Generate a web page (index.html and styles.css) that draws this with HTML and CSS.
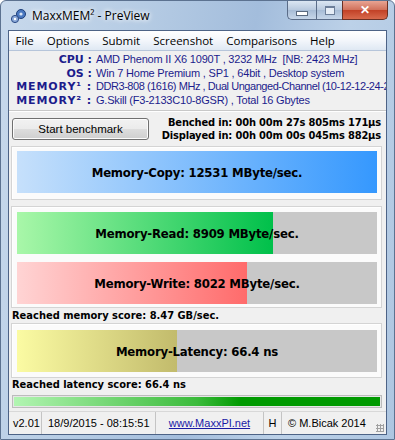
FILE: index.html
```html
<!DOCTYPE html>
<html lang="en">
<head>
    <meta charset="UTF-8">
    <title>MaxxMEM² - PreView</title>
    <link rel="stylesheet" href="styles.css">
</head>
<body>
    <div class="window">
        <div class="titlebar">
            <svg class="app-icon" width="18" height="16" viewBox="0 0 18 16">
                <circle cx="11" cy="6" r="4.5" fill="#4a78c0" stroke="#1e3f7a" stroke-width="1"/>
                <circle cx="11" cy="6" r="1.6" fill="#dbe6f5"/>
                <circle cx="5" cy="11" r="3.6" fill="#8aa8d8" stroke="#2b4a86" stroke-width="1"/>
                <circle cx="5" cy="11" r="1.2" fill="#fff"/>
            </svg>
            <span class="title">MaxxMEM² - PreView</span>
            <div class="caption-buttons">
                <div class="cap-btn cap-min"><span class="min-glyph"></span></div>
                <div class="cap-btn cap-max"><span class="max-glyph"></span></div>
                <div class="cap-btn cap-close">✕</div>
            </div>
        </div>

        <div class="client">
            <ul class="menu">
                <li>File</li>
                <li>Options</li>
                <li>Submit</li>
                <li>Screenshot</li>
                <li>Comparisons</li>
                <li>Help</li>
            </ul>

            <div class="info">
                <div class="info-row"><span class="label">CPU :</span><span class="value">AMD Phenom II X6 1090T , 3232 MHz&nbsp; [NB: 2423 MHz]</span></div>
                <div class="info-row"><span class="label">OS :</span><span class="value">Win 7 Home Premium , SP1 , 64bit , Desktop system</span></div>
                <div class="info-row"><span class="label label-mem">MEMORY¹ :</span><span class="value value-tight">DDR3-808 (1616) MHz , Dual Unganged-Channel (10-12-12-24-2T)</span></div>
                <div class="info-row"><span class="label label-mem">MEMORY² :</span><span class="value">G.Skill (F3-2133C10-8GSR) , Total 16 Gbytes</span></div>
            </div>

            <div class="bench-row">
                <button class="start-btn">Start benchmark</button>
                <div class="times">
                    <div>Benched in: 00h 00m 27s 805ms 171µs</div>
                    <div>Displayed in: 00h 00m 00s 045ms 882µs</div>
                </div>
            </div>

            <div class="panel panel-copy">
                <div class="bar">
                    <div class="fill fill-copy" style="width: 100%"></div>
                    <span class="bar-text">Memory-Copy: 12531 MByte/sec.</span>
                </div>
            </div>

            <div class="panel panel-rw">
                <div class="bar">
                    <div class="fill fill-read" style="width: 71%"></div>
                    <span class="bar-text">Memory-Read: 8909 MByte/sec.</span>
                </div>
                <div class="bar">
                    <div class="fill fill-write" style="width: 64%"></div>
                    <span class="bar-text">Memory-Write: 8022 MByte/sec.</span>
                </div>
            </div>

            <div class="score score-mem">Reached memory score: 8.47 GB/sec.</div>

            <div class="panel panel-lat">
                <div class="bar">
                    <div class="fill fill-latency" style="width: 44.4%"></div>
                    <span class="bar-text">Memory-Latency: 66.4 ns</span>
                </div>
            </div>

            <div class="score score-lat">Reached latency score: 66.4 ns</div>

            <div class="progress"><div class="progress-fill"></div></div>

            <div class="statusbar">
                <span class="st st-ver">v2.01</span>
                <span class="st st-date">18/9/2015 - 08:15:51</span>
                <span class="st st-link">www.MaxxPI.net</span>
                <span class="st st-h">H</span>
                <span class="st st-copy">© M.Bicak 2014</span>
                <span class="grip"></span>
            </div>
        </div>
    </div>
</body>
</html>
```

FILE: styles.css
```css
body {
    margin: 0;
    padding: 0;
    font-family: "Liberation Sans", Arial, sans-serif;
    background-color: #ffffff;
}
.window {
    width: 395px;
    height: 440px;
    box-sizing: border-box;
    padding: 0 7px 4px 7px;
    display: flex;
    flex-direction: column;
    background: linear-gradient(100deg, #c8d9ec 0%, #b6cce4 30%, #a3bddc 55%, #bcd1e8 75%, #aec6e1 100%);
    border: 1px solid #5c7290;
    border-radius: 6px 6px 0 0;
    overflow: hidden;
}
.titlebar {
    height: 29px;
    display: flex;
    align-items: flex-start;
    flex-shrink: 0;
}
.app-icon {
    margin: 7px 0 0 2px;
}
.title {
    font-family: "Open Sans", "DejaVu Sans", sans-serif;
    font-size: 12px;
    color: #000;
    margin: 6px 0 0 4px;
    text-shadow: 0 0 6px #fff, 0 0 4px #fff;
}
.caption-buttons {
    margin-left: auto;
    margin-right: -1px;
    display: flex;
}
.cap-btn {
    height: 19px;
    border: 1px solid #5a6c88;
    border-top: none;
    display: flex;
    align-items: center;
    justify-content: center;
    box-sizing: border-box;
}
.cap-min {
    width: 29px;
    border-radius: 0 0 0 5px;
    border-right: none;
    background: linear-gradient(#dbe6f2, #b8c9de 50%, #a7bcd6 51%, #c6d6e9);
}
.cap-max {
    width: 26px;
    border-right: none;
    background: linear-gradient(#dbe6f2, #b8c9de 50%, #a7bcd6 51%, #c6d6e9);
}
.cap-close {
    width: 46px;
    border-radius: 0 0 5px 0;
    background: linear-gradient(#e8a493, #d0705a 50%, #c24126 51%, #d86a4d);
    color: #fff;
    font-size: 12px;
    font-weight: bold;
    border-color: #6b3024;
}
.min-glyph {
    width: 10px;
    height: 3px;
    margin-top: 6px;
    background: #fff;
    border: 1px solid #5a6a80;
}
.max-glyph {
    width: 8px;
    height: 6px;
    border: 1px solid #6d7f99;
    border-top-width: 2px;
    background: #e6edf6;
}
.client {
    flex: 1;
    display: flex;
    flex-direction: column;
    background-color: #f0f0f0;
    border: 1px solid #4d6386;
    overflow: hidden;
}
.menu {
    list-style-type: none;
    margin: 0;
    padding: 0;
    display: flex;
    height: 19px;
    flex-shrink: 0;
    align-items: center;
    background: linear-gradient(#ffffff, #f3f6fb 50%, #dfe8f3);
    border-bottom: 1px solid #b6c5da;
    font-family: "Open Sans", "DejaVu Sans", sans-serif;
    font-size: 11.5px;
}
.menu li {
    padding: 0 6.5px;
}
.info {
    height: 60px;
    box-sizing: border-box;
    flex-shrink: 0;
    padding: 2px 0 0 0;
    color: #1c1c8c;
    font-size: 11px;
    border-bottom: 1px solid #c8c8c8;
    box-shadow: 0 1px 0 #ffffff;
}
.info-row {
    display: flex;
    white-space: nowrap;
    height: 13.5px;
    line-height: 13.5px;
}
.label {
    width: 83px;
    text-align: right;
    font-family: "DejaVu Sans", sans-serif;
    font-weight: bold;
    flex-shrink: 0;
    margin-right: 4px;
}
.label-mem {
    letter-spacing: 0.9px;
}
.value {
    letter-spacing: -0.2px;
}
.value-tight {
    letter-spacing: -0.45px;
}
.bench-row {
    height: 34px;
    box-sizing: border-box;
    flex-shrink: 0;
    display: flex;
    align-items: center;
    padding: 1px 5px 0 3px;
}
.start-btn {
    width: 137px;
    height: 22px;
    font-family: "Liberation Sans", Arial, sans-serif;
    font-size: 11.5px;
    color: #000;
    border: 1px solid #707070;
    border-radius: 3px;
    background: linear-gradient(#f2f2f2, #ebebeb 50%, #dddddd 51%, #cfcfcf);
    box-shadow: inset 0 0 0 1px #fcfcfc;
}
.times {
    margin-left: auto;
    text-align: right;
    font-family: "DejaVu Sans Condensed", "DejaVu Sans", sans-serif;
    font-size: 11px;
    font-weight: bold;
    line-height: 13px;
    letter-spacing: -0.15px;
    white-space: nowrap;
}
.panel {
    flex-shrink: 0;
    margin: 0 4px 0 2px;
    padding: 4px 4px 6px 5px;
    background-color: #fbfbfb;
    border: 1px solid #d4d4d4;
    box-shadow: inset 1px 1px 0 #ffffff;
    display: flex;
    flex-direction: column;
    gap: 8px;
}
.panel-copy {
    margin-top: 1px;
}
.panel-rw {
    margin-top: 6px;
    padding-top: 5px;
    padding-bottom: 3px;
}
.panel-lat {
    padding-top: 6px;
    padding-bottom: 5px;
}
.bar {
    position: relative;
    height: 42px;
    background-color: #c8c8c8;
    display: flex;
    align-items: center;
    justify-content: center;
}
.fill {
    position: absolute;
    left: 0;
    top: 0;
    bottom: 0;
}
.fill-copy {
    background: linear-gradient(90deg, #c6e0fb, #3598fe);
}
.fill-read {
    background: linear-gradient(90deg, #a9f7a9, #00c04a);
}
.fill-write {
    background: linear-gradient(90deg, #ffd4d4, #ff6b6b);
}
.fill-latency {
    background: linear-gradient(90deg, #fbfba3, #c2bb6c);
}
.bar-text {
    position: relative;
    font-family: "DejaVu Sans Condensed", "DejaVu Sans", sans-serif;
    font-size: 13px;
    font-weight: bold;
    letter-spacing: -0.2px;
    color: #000;
}
.score {
    flex-shrink: 0;
    font-family: "DejaVu Sans Condensed", "DejaVu Sans", sans-serif;
    font-size: 11px;
    font-weight: bold;
    padding-left: 3px;
    display: flex;
    align-items: center;
}
.score-mem {
    height: 15px;
}
.score-lat {
    height: 13px;
}
.progress {
    flex-shrink: 0;
    margin: 4px 4px 0 3px;
    height: 13px;
    box-sizing: border-box;
    border: 1px solid #bcbcbc;
    background-color: #e6e6e6;
    padding: 1px;
}
.progress-fill {
    height: 100%;
    background: linear-gradient(90deg, #b2f5b2, #3bbb3b 50%, #009a00 62%, #009a00);
}
.statusbar {
    margin-top: auto;
    height: 22px;
    flex-shrink: 0;
    display: flex;
    align-items: center;
    font-size: 11px;
    white-space: nowrap;
    border-top: 1px solid #d8d8d8;
    position: relative;
}
.st {
    height: 100%;
    display: flex;
    align-items: center;
    padding: 0 4px;
    box-sizing: border-box;
    border-right: 1px solid #c4c4c4;
    flex-shrink: 0;
}
.st-ver {
    width: 33px;
}
.st-date {
    width: 114px;
    padding-left: 6px;
}
.st-link {
    width: 108px;
    justify-content: center;
    color: #1a1aa6;
    text-decoration: underline;
}
.st-h {
    width: 18px;
    justify-content: center;
}
.st-copy {
    border-right: none;
    padding-left: 6px;
}
.grip {
    position: absolute;
    right: 2px;
    bottom: 2px;
    width: 8px;
    height: 8px;
    background: radial-gradient(circle, #a0a0a0 1px, transparent 1.2px) 0 0 / 3px 3px;
}
```
